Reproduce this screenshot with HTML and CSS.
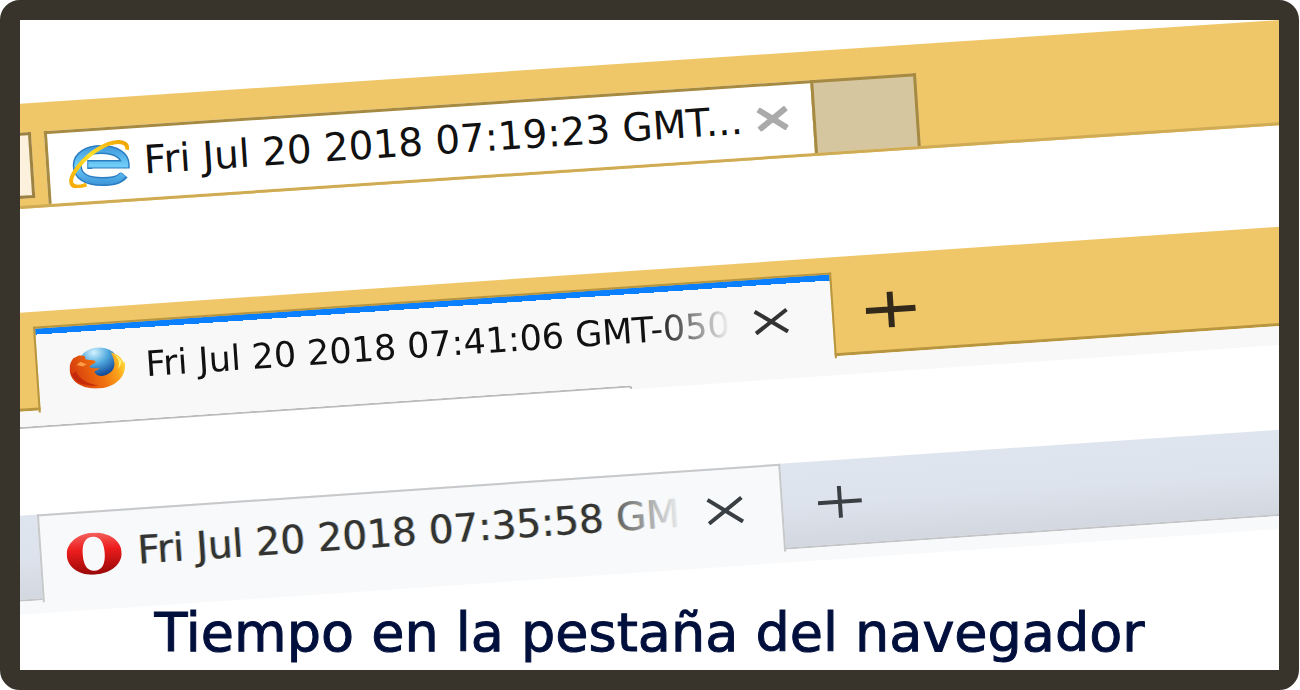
FILE: index.html
```html
<!DOCTYPE html>
<html lang="es">
<head>
  <meta charset="UTF-8">
  <title>Tiempo en la pestaña del navegador</title>
  <link rel="stylesheet" href="styles.css">
</head>
<body>
<main class="frame">
  <section class="browser ie">
    <div class="tabbar">
      <div class="tab-rest"></div>
      <div class="tab">
        <svg class="logo" viewBox="0 0 62 46" aria-hidden="true">
          <defs>
            <linearGradient id="ie-blue" gradientUnits="userSpaceOnUse" x1="0" y1="4" x2="0" y2="46">
              <stop offset="0" stop-color="#3b93d8"/>
              <stop offset=".5" stop-color="#6fcdf7"/>
              <stop offset="1" stop-color="#3790d6"/>
            </linearGradient>
            <linearGradient id="ie-gold" x1="0" y1="1" x2="1" y2="0">
              <stop offset="0" stop-color="#f5a800"/>
              <stop offset=".55" stop-color="#ffe22e"/>
              <stop offset="1" stop-color="#f0a000"/>
            </linearGradient>
          </defs>
          <g transform="rotate(4 32 25)" fill="none">
            <path d="M56 34C50 41 41 41 34 41C18 41 9 35 9 25C9 15 19 9 33 9C48 9 57 15 57 24H19" stroke="#2b7dc2" stroke-width="9"/>
            <path d="M55 34C50 41 41 41 34 41C18 41 9 35 9 25C9 15 19 9 33 9C48 9 57 15 57 24H20" stroke="url(#ie-blue)" stroke-width="6"/>
            <path d="M24 30H62" stroke="#fff" stroke-width="4"/>
          </g>
          <path d="M60 11C62 1 47 0 32 8C14 17 0 34 2 41C4 46 12 45 17 43" fill="none" stroke="url(#ie-gold)" stroke-width="4"/>
        </svg>
        <span class="title">Fri Jul 20 2018 07:19:23 GMT...</span>
        <button type="button" class="close" aria-label="Cerrar">
          <svg viewBox="0 0 32 24"><path d="M2 2L30 22M30 2L2 22"/></svg>
        </button>
      </div>
      <button type="button" class="new-tab" aria-label="Nueva pestaña"></button>
    </div>
  </section>

  <section class="browser firefox">
    <div class="tabbar">
      <div class="tab">
        <svg class="logo" viewBox="0 0 57 41" aria-hidden="true">
          <defs>
            <radialGradient id="ff-globe" cx=".4" cy=".15" r=".9">
              <stop offset="0" stop-color="#d4f3ff"/>
              <stop offset=".4" stop-color="#4fa9de"/>
              <stop offset=".8" stop-color="#164f9d"/>
              <stop offset="1" stop-color="#0a2a6b"/>
            </radialGradient>
            <linearGradient id="ff-fox" x1="0" y1=".4" x2="1" y2=".2">
              <stop offset="0" stop-color="#d63c0c"/>
              <stop offset=".5" stop-color="#f0700f"/>
              <stop offset=".8" stop-color="#fba51c"/>
              <stop offset="1" stop-color="#ffe03a"/>
            </linearGradient>
          </defs>
          <ellipse cx="30" cy="16" rx="20" ry="16" fill="url(#ff-globe)"/>
          <path d="M5 9L8 8C11 6 14 7 17 8L17 11L21 12C24 12 28 13 27 15L21 18C20 21 25 20 31 21L25 24C27 29 34 30 39 27C46 24 48 17 43 6C50 8 54 13 55 17L56 16C58 27 49 41 28 41C11 41 -1 31 1 19C1 14 3 12 5 9Z" fill="url(#ff-fox)"/>
          <path d="M1 21C3 34 15 39 29 38C18 36 9 30 7 22L3 25Z" fill="#b91c0a" opacity=".65"/>
          <path d="M43 6C50 10 52 16 49 23C51 21 53 18 53 15C51 11 47 8 43 6Z" fill="#ffec70"/>
          <path d="M8 16L12 13L18 16L14 18Z" fill="#ff9b42"/>
        </svg>
        <span class="title">Fri Jul 20 2018 07:41:06 GMT-050</span>
        <button type="button" class="close" aria-label="Cerrar">
          <svg viewBox="0 0 36 26"><path d="M2 2L34 24M34 2L2 24"/></svg>
        </button>
      </div>
      <button type="button" class="new-tab" aria-label="Nueva pestaña">
        <svg viewBox="0 0 50 36"><path d="M0 18H50M25 0V36"/></svg>
      </button>
    </div>
    <div class="toolbar"><div class="url-edge"></div></div>
  </section>

  <section class="browser opera">
    <div class="tabbar">
      <div class="tab">
        <svg class="logo" viewBox="0 0 55 42" aria-hidden="true">
          <defs>
            <linearGradient id="opera-red" x1="0" y1="0" x2="0" y2="1">
              <stop offset="0" stop-color="#f4605c"/>
              <stop offset=".4" stop-color="#ec1c1c"/>
              <stop offset="1" stop-color="#980808"/>
            </linearGradient>
          </defs>
          <path fill="url(#opera-red)" fill-rule="evenodd" d="M27 0C43 0 55 9 55 21S43 42 27 42S0 33 0 21S12 0 27 0ZM27 4C19 4 16 11 16 21S19 38 27 38S38 31 38 21S35 4 27 4Z"/>
        </svg>
        <span class="title">Fri Jul 20 2018 07:35:58 GM</span>
        <button type="button" class="close" aria-label="Cerrar">
          <svg viewBox="0 0 38 28"><path d="M2 2L36 26M36 2L2 26"/></svg>
        </button>
      </div>
      <button type="button" class="new-tab" aria-label="Nueva pestaña">
        <svg viewBox="0 0 44 32"><path d="M0 16H44M22 0V32"/></svg>
      </button>
    </div>
    <div class="toolbar"></div>
  </section>

  <h1 class="caption">Tiempo en la pestaña del navegador</h1>
</main>
</body>
</html>
```

FILE: styles.css
```css
*{
  box-sizing: border-box;
}
body{
  margin: 0;
  background: #fff;
  font-family: "DejaVu Sans", Verdana, sans-serif;
}
button{
  padding: 0;
  border: 0;
  background: none;
  cursor: pointer;
}
svg{
  display: block;
}
.frame{
  min-height: 100vh;
  margin-right: 1px;
  padding-top: 85px;
  border: 20px solid #38332b;
  border-radius: 20px;
  background: #fff;
  overflow: hidden;
}

/* browser strips, tilted and running off both sides of the frame */
.browser{
  margin: 0 -40px 0 -20px;
  transform: rotate(-3.9deg);
  transform-origin: 0 0;
}
.tabbar{
  display: flex;
  align-items: flex-start;
}
.tab{
  display: flex;
  align-items: center;
  flex: none;
}
.logo{
  flex: none;
}
.title{
  flex: 1;
  min-width: 0;
  overflow: hidden;
  white-space: nowrap;
  line-height: 48px;
  color: #111;
}
.close, .new-tab{
  flex: none;
}
.close path, .new-tab path{
  fill: none;
  stroke: #333;
  stroke-width: 4;
}

.ie{
  margin-bottom: 104px;
  transform: rotate(-3.8deg);
}
.ie .tabbar{
  height: 105px;
  background: #efc769;
  border-bottom: 3px solid #cfab55;
}
.tab-rest{
  width: 29px;
  height: 66px;
  margin: 29px 13px 0 0;
  border: 3px solid #9c8243;
  border-left: 0;
  background: #fbf1dc;
}
.ie .tab{
  width: 768px;
  height: 73px;
  margin-top: 29px;
  padding: 0 24px 4px 19px;
  border: 3px solid #a68a42;
  border-width: 3px 0 0 3px;
  background: #fff;
}
.ie .logo{
  width: 62px;
  height: 46px;
}
.ie .title{
  margin-left: 14px;
  font-size: 39px;
}
.ie .close{
  width: 32px;
}
.ie .close path{
  stroke: #aaa;
  stroke-width: 6;
}
.ie .new-tab{
  width: 106px;
  height: 73px;
  margin-top: 29px;
  border: 3px solid #a68a42;
  border-bottom: 0;
  background: #d6c6a0;
}

.firefox{
  margin-bottom: 85px;
}
.firefox .tabbar{
  height: 99px;
  padding-left: 32px;
  background: #efc769;
  border-bottom: 3px solid #b8953f;
}
.firefox .tab{
  width: 800px;
  height: 86px;
  margin-top: 15px;
  border: 2px solid #b8953f;
  border-bottom: 0;
  padding: 2px 43px 0 31px;
  background: linear-gradient(#0a80ff 6px, #f8f8f8 6px);
}
.firefox .logo{
  width: 57px;
  height: 41px;
}
.firefox .title{
  margin: 0 16px 0 20px;
  font-size: 35px;
  -webkit-mask-image: linear-gradient(to right, #000 86%, transparent 99%);
  mask-image: linear-gradient(to right, #000 86%, transparent 99%);
}
.firefox .close{
  width: 36px;
}
.firefox .new-tab{
  width: 50px;
  margin: 38px 0 0 32px;
}
.firefox .new-tab path{
  stroke: #33291a;
  stroke-width: 6;
}
.firefox .toolbar{
  height: 19px;
  padding-top: 15px;
  background: #f8f8f8;
}
.url-edge{
  width: 626px;
  height: 4px;
  border: 2px solid #bbb;
  border-width: 2px 2px 0 0;
  border-top-right-radius: 4px;
  background: #fff;
}

.opera .tabbar{
  height: 86px;
  padding-left: 37px;
  background: linear-gradient(#dfe5ee, #dde3ec 50%, #d2d7e0);
  border-bottom: 2px solid #c3c5c9;
}
.opera .tab{
  width: 745px;
  height: 88px;
  padding: 0 37px 4px 25px;
  border: 2px solid #c6c8ca;
  border-bottom: 0;
  background: #f7f9fb;
}
.opera .logo{
  width: 55px;
  height: 42px;
}
.opera .title{
  margin: 0 10px 0 16px;
  font-size: 39px;
  color: #333;
  text-shadow: -1px 0 rgba(240, 150, 0, .5), 1px 0 rgba(0, 120, 240, .5);
  -webkit-mask-image: linear-gradient(to right, #000 82%, transparent 98%);
  mask-image: linear-gradient(to right, #000 82%, transparent 98%);
}
.opera .close{
  width: 38px;
}
.opera .new-tab{
  width: 44px;
  margin: 26px 0 0 35px;
}
.opera .close path, .opera .new-tab path{
  stroke: #3a3f44;
}
.opera .toolbar{
  height: 13px;
  background: #f7f9fb;
}

.caption{
  position: relative;
  margin: -15px 0 0;
  font-size: 54px;
  font-weight: normal;
  line-height: 64px;
  text-align: center;
  color: #000f3c;
  -webkit-text-stroke: 1px #000f3c;
}
```
